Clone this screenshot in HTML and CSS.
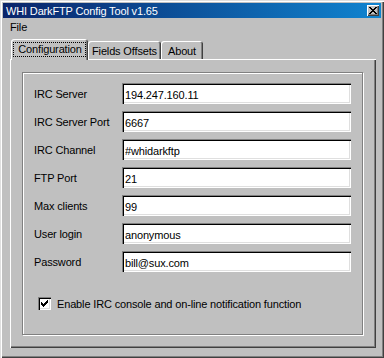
FILE: index.html
```html
<!DOCTYPE html>
<html lang="en">
<head>
  <meta charset="UTF-8">
  <title>WHI DarkFTP Config Tool v1.65</title>
  <link rel="stylesheet" href="styles.css">
</head>
<body>
  <div class="window">
    <div class="titlebar">
      <span class="title">WHI DarkFTP Config Tool v1.65</span>
      <div class="close-btn">
        <svg width="8" height="7" viewBox="0 0 8 7">
          <path d="M0 0h2v1h1v1h2v-1h1v-1h2v1h-1v1h-1v1h-1v1h1v1h1v1h1v1h-2v-1h-1v-1h-2v1h-1v1h-2v-1h1v-1h1v-1h1v-1h-1v-1h-1v-1h-1z" fill="#000"/>
        </svg>
      </div>
    </div>

    <div class="menubar">
      <span class="menu-item">File</span>
    </div>

    <div class="tabs">
      <div class="tab active"><span class="focus">Configuration</span></div>
      <div class="tab tab-fields">Fields Offsets</div>
      <div class="tab tab-about">About</div>
    </div>

    <div class="panel">
      <div class="group">
        <div class="form-grid">
          <label>IRC Server</label>
          <input type="text" class="field" value="194.247.160.11">
          <label>IRC Server Port</label>
          <input type="text" class="field" value="6667">
          <label>IRC Channel</label>
          <input type="text" class="field" value="#whidarkftp">
          <label>FTP Port</label>
          <input type="text" class="field" value="21">
          <label>Max clients</label>
          <input type="text" class="field" value="99">
          <label>User login</label>
          <input type="text" class="field" value="anonymous">
          <label>Password</label>
          <input type="text" class="field" value="bill@sux.com">
        </div>

        <div class="check-row">
          <div class="checkbox">
            <svg width="7" height="7" viewBox="0 0 7 7">
              <path d="M0 2h1v1h1v1h1v-1h1v-1h1v-1h1v-1h1v3h-1v1h-1v1h-1v1h-1v1h-1v-1h-1v-1h-1z" fill="#000"/>
            </svg>
          </div>
          <span>Enable IRC console and on-line notification function</span>
        </div>
      </div>
    </div>
  </div>
</body>
</html>
```

FILE: styles.css
```css
* {
  margin: 0;
  padding: 0;
  box-sizing: border-box;
}

body {
  font-family: 'Liberation Sans', Arial, sans-serif;
  font-size: 11px;
  letter-spacing: -0.15px;
  color: #000;
  background-color: #c0c0c0;
}

.window {
  width: 384px;
  height: 358px;
  padding: 3px;
  background-color: #c0c0c0;
  box-shadow: inset 1px 1px #dfdfdf, inset 2px 2px #fff, inset -1px -1px #404040, inset -2px -2px #808080;
}

.titlebar {
  display: flex;
  justify-content: space-between;
  align-items: center;
  height: 15px;
  padding: 0 2px 0 3px;
  background: linear-gradient(to right, #0a246a, #1084d0);
}

.title {
  color: #fff;
  font-size: 11px;
}

.close-btn {
  display: flex;
  align-items: center;
  justify-content: center;
  width: 12px;
  height: 11px;
  background-color: #c0c0c0;
  box-shadow: inset 1px 1px #fff, inset -1px -1px #404040, inset -2px -2px #808080;
}

.close-btn svg {
  margin-left: -1px;
}

.menubar {
  height: 18px;
  display: flex;
  align-items: center;
  padding-left: 7px;
}

.tabs {
  display: flex;
  align-items: flex-end;
  height: 20px;
  margin-top: 3px;
  padding-left: 8px;
}

.tab {
  height: 18px;
  display: flex;
  align-items: center;
  justify-content: center;
  background-color: #c0c0c0;
  border-radius: 3px 3px 0 0;
  box-shadow: inset 1px 1px #fff, inset -1px 0 #404040, inset -2px 0 #808080;
}

.tab.active {
  position: relative;
  z-index: 1;
  width: 77px;
  height: 21px;
  margin-bottom: -1px;
  align-items: flex-start;
  padding-top: 4px;
}

.focus {
  padding: 0 3px 1px 4px;
  outline: 1px dotted #000;
}

.tab-fields {
  width: 73px;
  padding-top: 1px;
}

.tab-about {
  width: 42px;
  padding-top: 1px;
}

.panel {
  width: 366px;
  height: 289px;
  margin-left: 7px;
  padding: 13px 0 0 12px;
  box-shadow: inset 1px 1px #fff, inset -1px -1px #404040, inset -2px -2px #808080;
}

.group {
  width: 341px;
  height: 263px;
  padding: 10px 11px 0 11px;
  border: 1px solid #808080;
  box-shadow: inset 1px 1px #fff, 1px 1px #fff;
}

.form-grid {
  display: grid;
  grid-template-columns: 88px 229px;
  grid-auto-rows: 21px;
  row-gap: 7px;
  align-items: center;
}

.field {
  height: 21px;
  padding: 2px 3px 0 3px;
  border: none;
  outline: none;
  font-family: 'Liberation Sans', Arial, sans-serif;
  font-size: 11px;
  letter-spacing: -0.15px;
  color: #000;
  background-color: #fff;
  box-shadow: inset 1px 1px #808080, inset 2px 2px #000, inset -1px -1px #fff, inset -2px -2px #dfdfdf;
}

.check-row {
  display: flex;
  align-items: center;
  gap: 6px;
  margin-top: 25px;
  margin-left: 4px;
}

.checkbox {
  width: 13px;
  height: 13px;
  display: flex;
  align-items: center;
  justify-content: center;
  background-color: #fff;
  box-shadow: inset 1px 1px #808080, inset 2px 2px #000, inset -1px -1px #fff, inset -2px -2px #dfdfdf;
}
```
